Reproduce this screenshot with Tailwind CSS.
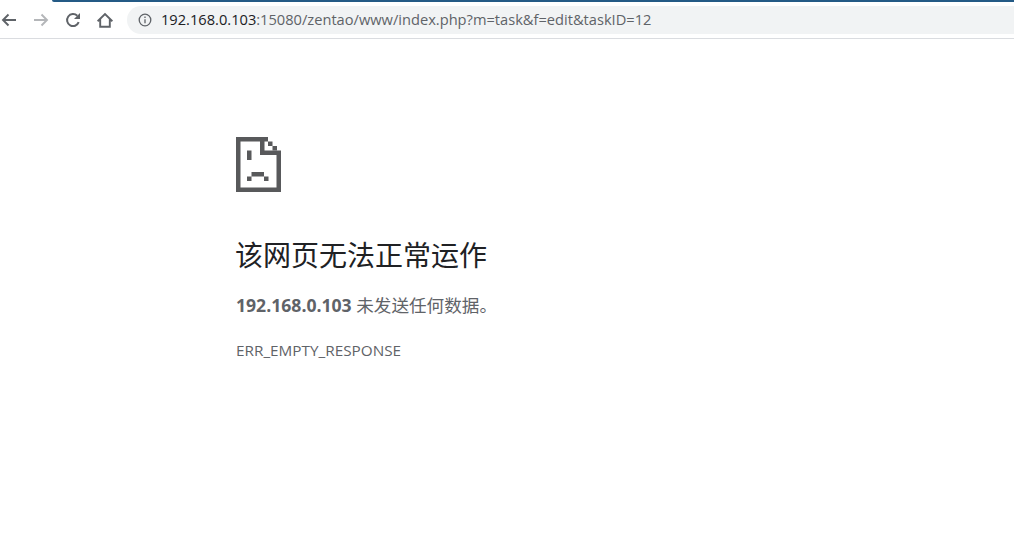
<!DOCTYPE html>
<html lang="zh-CN">
<head>
    <meta charset="UTF-8">
    <meta name="viewport" content="width=device-width, initial-scale=1.0">
    <title>192.168.0.103</title>
    <script src="https://cdn.jsdelivr.net/npm/@tailwindcss/browser@4"></script>
</head>
<body class="bg-white h-[552px] overflow-hidden font-['Open_Sans','Noto_Sans_CJK_SC',sans-serif]">
    <!-- toolbar -->
    <div class="h-[39px] border-b border-[#dadce0] flex flex-col">
        <div class="h-[2px] ml-[52px] bg-[#245a85] rounded-bl-[4px]"></div>
        <div class="flex items-center flex-1 py-[3px]">
            <div class="w-[127px] shrink-0 flex items-center">
                <svg class="ml-[1px]" width="16" height="16" viewBox="0 0 16 16" fill="none" stroke="#5f6368" stroke-width="1.9"><path d="M15 8H2M7.500 2.500L2 8l5.500 5.500"/></svg>
                <svg class="ml-[16px]" width="16" height="16" viewBox="0 0 16 16" fill="none" stroke="#b4b6b9" stroke-width="1.9"><path d="M1 8h13M8.500 2.500L14 8l-5.500 5.500"/></svg>
                <svg class="ml-[16px]" width="16" height="16" viewBox="0 0 16 16" fill="none" stroke="#5f6368" stroke-width="2"><path d="M13.700 10.200A6 6 0 1 1 12.300 3.800"/><path d="M15 1v6H9z" fill="#5f6368" stroke="none"/></svg>
                <svg class="ml-[16px]" width="16" height="16" viewBox="0 0 16 16" fill="none" stroke="#5f6368" stroke-width="1.9"><path d="M.6 9.200L8 2l7.400 7.200M3.200 7v7.700h9.600V7"/></svg>
            </div>
            <div class="flex-1 h-[28px] bg-[#f1f3f4] rounded-l-[14px] flex items-center pl-[11px] text-[14.65px] text-[#5f6368]">
                <svg width="14" height="14" viewBox="0 0 14 14" fill="none" stroke="#5f6368" stroke-width="1.3"><circle cx="7" cy="7" r="5.800"/><path d="M7 6.200v4M7 3.400v1.600"/></svg>
                <span class="ml-[9px]"><span class="text-[#202124]">192.168.0.103</span>:15080/zentao/www/index.php?m=task&amp;f=edit&amp;taskID=12</span>
            </div>
        </div>
    </div>

    <!-- error page -->
    <div class="pl-[236px] pt-[98px]">
        <svg class="block" width="45" height="55" viewBox="0 0 45 55" fill="#58595b">
            <path d="M0 0h32v4.500H28.500v9H45V55H0zM4.500 4.500V50.500H40.500V18H24V4.500z" fill-rule="evenodd"/>
            <path d="M32 4.500h4.500V9H32zM36.500 9H41v4.500h-4.500z"/>
            <path d="M11 13.500h4.500V23H11zM15.500 35H28v4.500H15.500zM11 39.500h4.500V44H11zM28 39.500h4.500V44H28z"/>
        </svg>
        <h1 class="mt-[45px] -ml-[1px] text-[28px] leading-[36px] text-[#202124] font-normal">该网页无法正常运作</h1>
        <p class="mt-[19px] text-[17.6px] leading-[26px] text-[#5f6368]"><strong class="font-bold">192.168.0.103</strong> 未发送任何数据。</p>
        <div class="mt-[21px] text-[15.3px] leading-[22px] text-[#5f6368]">ERR_EMPTY_RESPONSE</div>
    </div>
</body>
</html>
